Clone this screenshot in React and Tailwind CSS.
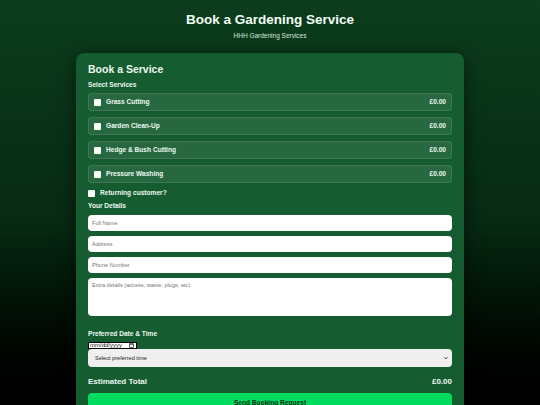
import React, { useState } from 'react';

const services = [
  { name: 'Grass Cutting', price: 0 },
  { name: 'Garden Clean-Up', price: 0 },
  { name: 'Hedge & Bush Cutting', price: 0 },
  { name: 'Pressure Washing', price: 0 },
];

const fmt = (v) => '£' + v.toFixed(2);

const inputCls =
  'w-full h-[16px] rounded-[4px] bg-white px-[4px] text-[5.6px] text-gray-800 placeholder:text-[#777] outline-none';

export default function App() {
  const [picked, setPicked] = useState({});

  const total = services.reduce((sum, s) => (picked[s.name] ? sum + s.price : sum), 0);

  return (
    <div
      className="min-h-[405px] w-full bg-gradient-to-b from-[#0c3d1d] via-[#072a13] to-[#000000] pt-[12px] pb-[20px] text-white"
      style={{ fontFamily: '"Liberation Sans", Arial, sans-serif' }}
    >
      <header className="text-center">
        <h1 className="text-[13.5px] leading-[16px] font-bold text-[#f2fff5]">Book a Gardening Service</h1>
        <p className="mt-[4px] text-[6.5px] leading-[8px] text-[#d5e8da]">HHH Gardening Services</p>
      </header>

      <form className="mx-auto mt-[13px] w-[388px] rounded-[8px] bg-[#155c30] px-[12px] pt-[10px] pb-[12px] shadow-[0_4px_18px_rgba(0,0,0,0.55)]">
        <h2 className="text-[10.5px] leading-[12px] font-bold text-[#eef8f0]">Book a Service</h2>

        <div className="mt-[6px] text-[6.6px] leading-[8px] font-bold text-[#eef8f0]">Select Services</div>
        <div className="mt-[4px] flex flex-col gap-[6px]">
          {services.map((s) => (
            <label
              key={s.name}
              className="flex h-[18px] items-center rounded-[4px] border border-white/10 bg-white/[0.08] pl-[5px] pr-[5px]"
            >
              <input
                type="checkbox"
                checked={!!picked[s.name]}
                onChange={() => setPicked({ ...picked, [s.name]: !picked[s.name] })}
                className="h-[7px] w-[7px] appearance-none rounded-[1px] bg-white checked:bg-[#00dd5e]"
              />
              <span className="ml-[5px] text-[6.6px] font-bold text-[#eef8f0]">{s.name}</span>
              <span className="ml-auto text-[6.6px] font-bold text-[#eef8f0]">{fmt(s.price)}</span>
            </label>
          ))}
        </div>

        <label className="mt-[6px] flex h-[8px] items-center">
          <input type="checkbox" className="h-[7px] w-[7px] appearance-none rounded-[1px] bg-white checked:bg-[#00dd5e]" />
          <span className="ml-[5px] text-[6.6px] font-bold text-[#eef8f0]">Returning customer?</span>
        </label>

        <div className="mt-[5px] text-[6.6px] leading-[8px] font-bold text-[#eef8f0]">Your Details</div>
        <div className="mt-[5px] flex flex-col gap-[5px]">
          <input className={inputCls} placeholder="Full Name" />
          <input className={inputCls} placeholder="Address" />
          <input className={inputCls} placeholder="Phone Number" />
          <textarea
            className="block h-[38px] w-full resize-none rounded-[4px] bg-white px-[4px] py-[4px] text-[5.6px] leading-[7px] text-gray-800 placeholder:text-[#777] outline-none"
            placeholder="Extra details (access, waste, plugs, etc)"
          />
        </div>

        <div className="mt-[14px] text-[6.6px] leading-[8px] font-bold text-[#eef8f0]">Preferred Date &amp; Time</div>
        <div className="mt-[4px] flex h-[7px] w-[49px] items-center border-[0.5px] border-black bg-white pl-[1px] pr-[2px]">
          <input
            type="text"
            placeholder="mm/dd/yyyy"
            className="w-full min-w-0 bg-transparent p-0 text-[6px] leading-[7px] text-black placeholder:text-[#111] outline-none"
          />
          <svg viewBox="0 0 10 10" className="h-[5px] w-[5px] shrink-0" fill="none" stroke="#000" strokeWidth="1.2">
            <rect x="1" y="1.5" width="8" height="7.5" />
            <line x1="1" y1="3.5" x2="9" y2="3.5" />
          </svg>
        </div>
        <div className="relative">
          <select className="block h-[18px] w-full appearance-none rounded-[4px] bg-[#efefef] px-[7px] text-[5.6px] text-[#222] outline-none">
            <option>Select preferred time</option>
            <option>Morning (8am - 12pm)</option>
            <option>Afternoon (12pm - 4pm)</option>
            <option>Evening (4pm - 7pm)</option>
          </select>
          <svg
            viewBox="0 0 10 10"
            className="pointer-events-none absolute right-[4px] top-[7px] h-[4px] w-[4px]"
            fill="none"
            stroke="#222"
            strokeWidth="2.2"
          >
            <path d="M1.5 3.2 L5 7 L8.5 3.2" />
          </svg>
        </div>

        <div className="mt-[10px] flex items-center justify-between">
          <span className="text-[8px] leading-[10px] font-bold text-[#eef8f0]">Estimated Total</span>
          <span className="text-[8px] leading-[10px] font-bold text-[#eef8f0]">{fmt(total)}</span>
        </div>

        <button
          type="button"
          className="mt-[6px] flex h-[20px] w-full items-center justify-center rounded-[4px] bg-[#00dd5e] text-[6.6px] font-bold text-[#0b2e16]"
        >
          Send Booking Request
        </button>
      </form>
    </div>
  );
}
